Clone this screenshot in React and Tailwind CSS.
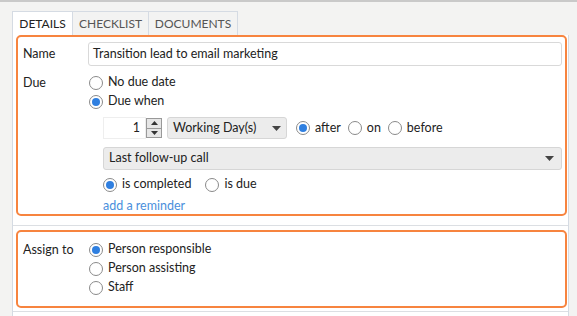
import React from "react";

function Radio({ checked, label, className = "" }) {
  return (
    <label className={`flex items-center gap-[5px] ${className}`}>
      <span className="w-[14px] h-[14px] rounded-full border border-[#8a8a8a] bg-white flex items-center justify-center shrink-0">
        {checked && <span className="w-[8px] h-[8px] rounded-full bg-[#2f7fe0]" />}
      </span>
      <span>{label}</span>
    </label>
  );
}

function Caret() {
  return (
    <svg width="9" height="5" viewBox="0 0 9 5">
      <path d="M0 0 L9 0 L4.5 5 Z" fill="#444" />
    </svg>
  );
}

export default function App() {
  return (
    <div
      className="w-[577px] h-[316px] bg-[#f3f3f2] overflow-hidden text-[12.5px] text-[#222]"
      style={{ fontFamily: '"Segoe UI", Lato, sans-serif' }}
    >
      <div className="h-[2px] bg-[#c9c9c9]" />
      <div className="pl-[12px] pr-[8px] pt-[9px]">
        <div className="flex h-[24px] text-[12px]">
          <div className="w-[61px] bg-white border border-b-0 border-[#d5dbe3] flex items-center justify-center">DETAILS</div>
          <div className="w-[76px] border-t border-r border-[#d5dbe3] flex items-center justify-center text-[#555]">CHECKLIST</div>
          <div className="w-[89px] border-t border-r border-[#d5dbe3] flex items-center justify-center text-[#555]">DOCUMENTS</div>
        </div>
        <div className="bg-white border-x border-[#d5dbe3] h-[290px] pl-[3px] pr-[1px]">
          <div className="border-2 border-[#f7843f] rounded-[5px] h-[181px] pl-[5px] pr-[3px] pt-[5px]">
            <div className="flex items-center h-[24px]">
              <span className="w-[65px]">Name</span>
              <div className="flex-1 h-[24px] border border-[#d9d9d9] rounded-[3px] flex items-center px-[4px]">
                Transition lead to email marketing
              </div>
            </div>
            <div className="flex mt-[7px]">
              <span className="w-[66px] leading-[19px]">Due</span>
              <div className="flex-1 flex flex-col">
                <Radio label="No due date" className="h-[19px]" />
                <Radio checked label="Due when" className="h-[19px]" />
                <div className="pl-[14px] flex flex-col">
                  <div className="flex items-center h-[22px] mt-[6px]">
                    <div className="w-[43px] h-[22px] border border-[#eeeeee] flex items-center justify-end pr-[5px]">1</div>
                    <div className="w-[16px] h-[20px] flex flex-col border border-[#999] bg-[#e6e6e6]">
                      <div className="flex-1 flex items-center justify-center border-b border-[#999]">
                        <svg width="7" height="4" viewBox="0 0 7 4"><path d="M0 4 L7 4 L3.5 0 Z" fill="#333" /></svg>
                      </div>
                      <div className="flex-1 flex items-center justify-center">
                        <svg width="7" height="4" viewBox="0 0 7 4"><path d="M0 0 L7 0 L3.5 4 Z" fill="#333" /></svg>
                      </div>
                    </div>
                    <div className="ml-[5px] w-[120px] h-[22px] bg-[#ececec] border border-[#d6d6d6] rounded-[3px] flex items-center justify-between px-[5px]">
                      <span>Working Day(s)</span>
                      <Caret />
                    </div>
                    <Radio checked label="after" className="ml-[9px]" />
                    <Radio label="on" className="ml-[7px]" />
                    <Radio label="before" className="ml-[7px]" />
                  </div>
                  <div className="mt-[8px] h-[23px] bg-[#ececec] border border-[#d6d6d6] rounded-[3px] flex items-center justify-between pl-[5px] pr-[7px]">
                    <span>Last follow-up call</span>
                    <Caret />
                  </div>
                  <div className="flex items-center h-[19px] mt-[5px]">
                    <Radio checked label="is completed" />
                    <Radio label="is due" className="ml-[14px]" />
                  </div>
                  <div className="text-[#4a8fdc] h-[19px] leading-[19px] mt-[2px]">add a reminder</div>
                </div>
              </div>
            </div>
          </div>
          <div className="border-t border-[#dcdfe3] mt-[9px] -ml-[3px] -mr-[1px]" />
          <div className="border-2 border-[#f7843f] rounded-[5px] h-[78px] mt-[4px] pl-[5px] pt-[8px] flex">
            <span className="w-[66px] leading-[19px]">Assign to</span>
            <div className="flex flex-col">
              <Radio checked label="Person responsible" className="h-[19px]" />
              <Radio label="Person assisting" className="h-[19px]" />
              <Radio label="Staff" className="h-[19px]" />
            </div>
          </div>
          <div className="border-t border-[#dcdfe3] mt-[3px] -ml-[3px] -mr-[1px]" />
        </div>
      </div>
    </div>
  );
}
